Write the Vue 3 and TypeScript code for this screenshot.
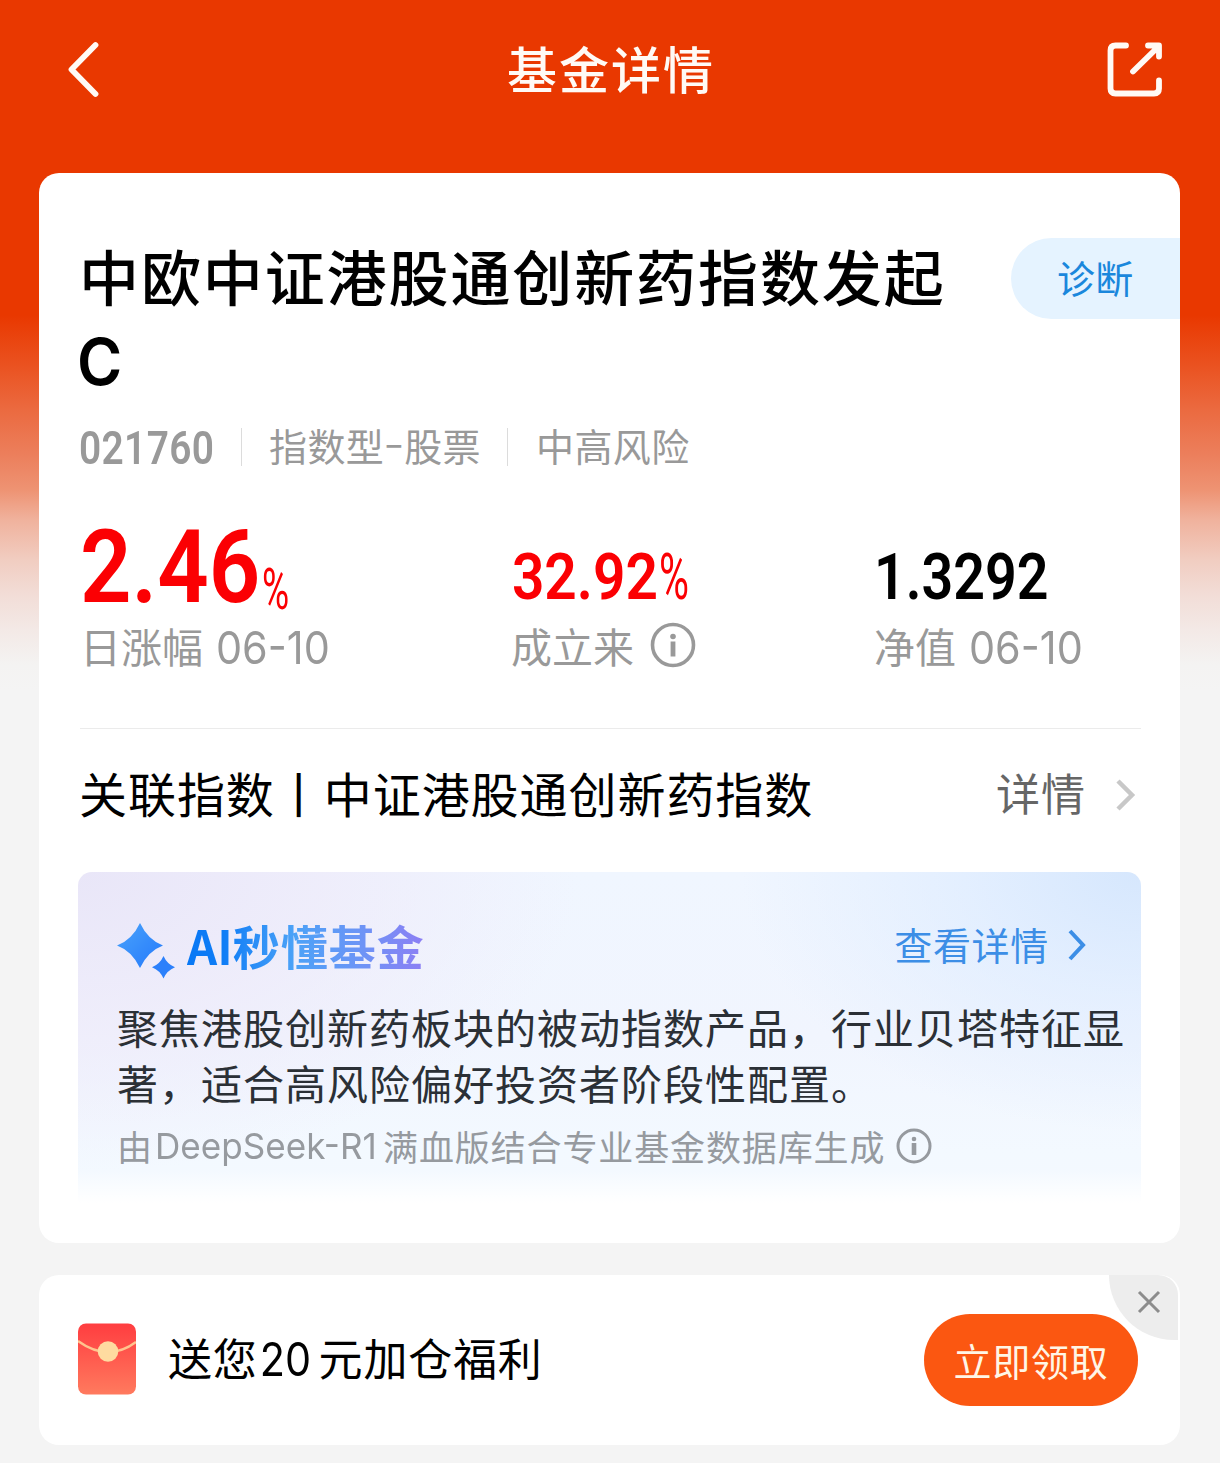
<script setup lang="ts">
interface Stat {
  key: string
  value: string
  percent: boolean
  label: string
  date?: string
  info?: boolean
}

const stats: Stat[] = [
  { key: 'day', value: '2.46', percent: true, label: '日涨幅', date: '06-10' },
  { key: 'total', value: '32.92', percent: true, label: '成立来', info: true },
  { key: 'worth', value: '1.3292', percent: false, label: '净值', date: '06-10' },
]
</script>

<template>
  <div class="page">
    <header class="nav">
      <svg class="back" width="40" height="64" viewBox="0 0 40 64"><path d="M33.500 8 9.500 32.500 33.500 57" /></svg>
      <h1>基金详情</h1>
      <svg class="share" width="64" height="64" viewBox="0 0 64 64">
        <path d="M22 8.500H11.500Q6.500 8.500 6.500 13.500V51.500Q6.500 56.500 11.500 56.500H50Q55 56.500 55 51.500V43.500M29 34.500 54 10M44 8.500H55V19.500" />
      </svg>
    </header>

    <main class="card">
      <div class="title-row">
        <h2>中欧中证港股通创新药指数发起<span class="share-class">C</span></h2>
        <a class="diagnose">诊断</a>
      </div>

      <div class="meta">
        <span class="code"><b>021760</b></span>
        <i></i>
        <span class="type">指数型<em>-</em>股票</span>
        <i></i>
        <span class="risk">中高风险</span>
      </div>

      <div class="stats">
        <div v-for="s in stats" :key="s.key" class="stat" :class="s.key">
          <div class="value"><span class="num">{{ s.value }}</span><span v-if="s.percent" class="pct">%</span></div>
          <div class="label">
            <span>{{ s.label }}</span>
            <span v-if="s.date" class="date">{{ s.date }}</span>
            <svg v-if="s.info" width="46" height="46" viewBox="0 0 46 46">
              <circle cx="23" cy="23" r="20.500" fill="none" stroke="#999" stroke-width="3.600" />
              <circle cx="23" cy="14.500" r="2.800" fill="#999" />
              <rect x="20.600" y="19.500" width="4.800" height="15" fill="#999" />
            </svg>
          </div>
        </div>
      </div>

      <div class="index-row">
        <span class="index-name">关联指数<span class="bar">丨</span>中证港股通创新药指数</span>
        <span class="index-more">详情</span>
        <svg width="24" height="36" viewBox="0 0 24 36"><path d="M4 4 18 18 4 32" /></svg>
      </div>

      <section class="ai">
        <div class="ai-head">
          <svg class="spark" width="58" height="58" viewBox="0 0 58 58">
            <defs>
              <linearGradient id="spark" x1="0" y1="0" x2="1" y2="1">
                <stop offset="0" stop-color="#4aa3fb" />
                <stop offset="1" stop-color="#2479fb" />
              </linearGradient>
            </defs>
            <path fill="url(#spark)" d="M23 2Q31 19 46 24.500 31 30 23 47 15 30 0 24.500 15 19 23 2Z" />
            <path fill="#2c80fb" d="M46.500 35Q50 43 58 46.300 50 49.500 46.500 57.500 43 49.500 35 46.300 43 43 46.500 35Z" />
          </svg>
          <span class="ai-title"><span class="ai-latin">AI</span>秒懂基金</span>
          <span class="ai-more">查看详情</span>
          <svg class="ai-chev" width="22" height="36" viewBox="0 0 22 36"><path d="M4 4 17 18 4 32" /></svg>
        </div>
        <p class="ai-text">聚焦港股创新药板块的被动指数产品，行业贝塔特征显著，适合高风险偏好投资者阶段性配置。</p>
        <div class="ai-foot">
          <span class="by">由</span><span class="model">DeepSeek-R1</span><span>满血版结合专业基金数据库生成</span>
          <svg width="38" height="38" viewBox="0 0 38 38">
            <circle cx="19" cy="19" r="16" fill="none" stroke="#969a9f" stroke-width="3" />
            <circle cx="19" cy="12" r="2.300" fill="#969a9f" />
            <rect x="16.700" y="16" width="4.600" height="12" fill="#969a9f" />
          </svg>
        </div>
      </section>
    </main>

    <section class="promo">
      <svg class="envelope" width="58" height="72" viewBox="0 0 58 72">
        <defs>
          <linearGradient id="env" x1="0" y1="0" x2="0" y2="1">
            <stop offset="0" stop-color="#ff3d40" />
            <stop offset="1" stop-color="#ff7a5e" />
          </linearGradient>
        </defs>
        <rect y="0.500" width="58" height="71" rx="8" fill="url(#env)" />
        <path d="M0 18Q15 29 30 29T58 19" fill="none" stroke="#ffc48e" stroke-width="2.400" />
        <circle cx="30" cy="28.500" r="10.300" fill="#fedba0" />
      </svg>
      <div class="promo-text"><span>送您</span><span class="amount">20</span><span>元加仓福利</span></div>
      <button class="claim">立即领取</button>
      <div class="close">
        <svg width="24" height="24" viewBox="0 0 24 24"><path d="M2 2 22 22M22 2 2 22" /></svg>
      </div>
    </section>
  </div>
</template>

<style>
body {
  margin: 0;
}
</style>

<style scoped>
.page {
  box-sizing: border-box;
  width: 1220px;
  height: 1463px;
  overflow: hidden;
  padding: 0 40px 0 39px;
  font-family: "Noto Sans CJK SC", sans-serif;
  color: #000;
  white-space: nowrap;
  background: linear-gradient(180deg, #e93800 0, #e93800 315px, #ea5220 365px, #eb6a40 410px, #ec7f5c 455px, #ee9373 490px, #f0b29d 520px, #f1cdc1 560px, #f2ddd7 595px, #f3e9e6 630px, #f4f3f2 665px, #f4f4f4 690px);
}
h1, h2, p {
  margin: 0;
  font-weight: 400;
}
.nav {
  height: 173px;
  box-sizing: border-box;
  padding: 37px 12px 0 23px;
  display: flex;
  justify-content: space-between;
  align-items: flex-start;
}
.nav h1 {
  font-size: 50px;
  line-height: 64px;
  letter-spacing: 2px;
  font-weight: 500;
  color: #fffaf5;
  margin: -2px 0 0 16px;
}
.nav path {
  fill: none;
  stroke: #fffaf5;
  stroke-width: 5.800;
  stroke-linecap: round;
  stroke-linejoin: round;
}
.card {
  height: 1070px;
  box-sizing: border-box;
  padding: 61px 39px 0 39px;
  background: #fff;
  border-radius: 20px;
}
.title-row {
  display: flex;
  justify-content: space-between;
  align-items: flex-start;
  margin-right: -39px;
}
.title-row h2 {
  width: 880px;
  padding-left: 1px;
  font-size: 60px;
  line-height: 82px;
  letter-spacing: 1.900px;
  font-weight: 500;
  white-space: normal;
}
.share-class {
  display: block;
  font-family: Inter, sans-serif;
  font-size: 64px;
  font-weight: 600;
  transform: scaleX(0.960);
  transform-origin: left;
  margin: 5px 0 -5px -2px;
}
.diagnose {
  width: 169px;
  height: 81px;
  box-sizing: border-box;
  margin-top: 4px;
  padding-left: 46px;
  border-radius: 41px 0 0 41px;
  background: #e5f3ff;
  color: #1a87dc;
  font-size: 38px;
  line-height: 78px;
  letter-spacing: 0.300px;
}
.meta {
  height: 60px;
  margin-top: 19px;
  display: flex;
  align-items: center;
  color: #999;
  font-size: 38px;
  letter-spacing: 0.400px;
}
.meta i {
  width: 1px;
  height: 38px;
  background: #dcdcdc;
}
.meta > span {
  line-height: 56px;
  margin-top: -4px;
  box-sizing: border-box;
}
.meta > .code {
  width: 163px;
  margin-top: 2px;
  padding-left: 1px;
}
.code b {
  display: inline-block;
  font-family: Roboto, sans-serif;
  font-size: 46px;
  font-weight: 600;
  transform: scaleX(0.845);
  transform-origin: left;
}
.type {
  width: 265px;
  padding-left: 27px;
}
.type em {
  display: inline-block;
  width: 20px;
  font-style: normal;
  text-align: center;
  letter-spacing: 0;
  transform: translateY(-4px) scaleX(1.500);
}
.risk {
  padding-left: 28px;
}
.stats {
  display: flex;
  height: 252px;
  box-sizing: border-box;
  border-bottom: 1px solid #ebebeb;
  margin-left: 2px;
}
.stat {
  flex: none;
  padding-top: 32px;
}
.day { width: 431px; }
.total { width: 363px; }
.value {
  height: 107px;
  display: flex;
  align-items: flex-end;
  font-family: Roboto, sans-serif;
  font-size: 65px;
  line-height: 76px;
  font-weight: 600;
}
.num, .pct {
  display: block;
  transform-origin: left;
}
.day .value, .total .value { color: #fb0003; }
.day .num {
  width: 182px;
  font-size: 102px;
  line-height: 98px;
  transform: scaleX(0.885);
}
.day .pct {
  font-size: 57px;
  line-height: 52px;
  font-weight: 400;
  transform: scaleX(0.650);
}
.total .num {
  width: 147px;
  padding-left: 1px;
  transform: translateY(-1px) scaleX(0.875);
}
.total .pct {
  font-weight: 400;
  transform: translateY(-1px) scaleX(0.630);
}
.worth .num { transform: translateY(-1px) scaleX(0.855); }
.label {
  height: 60px;
  margin-top: -1px;
  display: flex;
  align-items: center;
  color: #999;
  font-size: 41px;
  line-height: 60px;
}
.date {
  font-family: Inter, sans-serif;
  font-size: 45px;
  font-feature-settings: "case";
  margin: 6px 0 0 13px;
  transform: scaleX(0.920);
  transform-origin: left;
}
.label svg { margin: 0 0 0 16px; }
.index-row {
  display: flex;
  align-items: center;
  height: 130px;
  margin-top: -2px;
  font-size: 48px;
  letter-spacing: 0.950px;
}
.index-name { margin-left: 1px; }
.index-more {
  margin-left: auto;
  font-size: 44px;
  color: #666;
}
.index-row svg { margin: 6px 3px 0 28px; }
.index-row path {
  fill: none;
  stroke: #c8c8c8;
  stroke-width: 4.500;
}
.ai {
  height: 331px;
  box-sizing: border-box;
  margin-top: 15px;
  padding: 37px 0 0 39px;
  border-radius: 14px 14px 4px 4px;
  background:
    linear-gradient(180deg, rgba(255, 255, 255, 0) 0, rgba(255, 255, 255, 0) 90%, #fff 100%),
    radial-gradient(ellipse 400px 260px at 100% 0, #d6e7fd 0, rgba(222, 236, 255, 0.700) 45%, rgba(240, 247, 255, 0) 100%),
    radial-gradient(ellipse 500px 300px at 0 0, #e9e6f8 0, rgba(238, 235, 250, 0.800) 50%, rgba(240, 245, 255, 0) 100%),
    linear-gradient(180deg, #f0f6ff 0, #f1f5fe 50%, #f3f9ff 85%, #f4f9ff 100%);
}
.ai-head {
  display: flex;
  align-items: center;
  height: 72px;
}
.spark { margin-top: 9px; }
.ai-title {
  margin: -1px 0 0 12px;
  font-size: 47px;
  line-height: 70px;
  letter-spacing: 1px;
  font-weight: 700;
  color: transparent;
  background: linear-gradient(90deg, #0878f5 0, #0f7df6 15%, #4ca2f7 45%, #6f93f6 75%, #8d7ef4 100%);
  background-clip: text;
  -webkit-background-clip: text;
}
.ai-latin {
  letter-spacing: 0;
}
.ai-more {
  margin: -3px 0 0 auto;
  font-size: 38px;
  letter-spacing: 0.700px;
  color: #3c8ee6;
}
.ai-chev { margin: 0 53px 0 17px; }
.ai-chev path {
  fill: none;
  stroke: #3c8ee6;
  stroke-width: 4;
}
.ai-text {
  margin-top: 17px;
  width: 1010px;
  font-size: 41px;
  line-height: 56px;
  letter-spacing: 1px;
  color: #2b3036;
  white-space: normal;
}
.ai-foot {
  display: flex;
  align-items: center;
  height: 60px;
  margin-top: 5px;
  font-size: 35px;
  letter-spacing: 0.880px;
  color: #969a9f;
}
.by { width: 38px; }
.model {
  width: 228px;
  font-family: Inter, sans-serif;
  font-size: 36px;
  letter-spacing: 0;
  font-feature-settings: "case";
  margin-top: 2px;
  transform: scaleX(0.975);
  transform-origin: left;
}
.ai-foot svg { margin: 1px 0 0 10px; }
.promo {
  position: relative;
  height: 170px;
  margin-top: 32px;
  box-sizing: border-box;
  padding: 0 42px 0 39px;
  display: flex;
  align-items: center;
  background: #fff;
  border-radius: 20px;
}
.envelope { margin-top: -3px; }
.promo-text {
  display: flex;
  align-items: center;
  margin: -7px 0 0 32px;
  font-size: 44px;
  letter-spacing: 0.800px;
}
.amount {
  width: 61px;
  box-sizing: border-box;
  padding-left: 2px;
  margin-top: 4px;
  font-family: Inter, sans-serif;
  font-size: 47px;
  letter-spacing: 0;
  transform: scaleX(0.880);
  transform-origin: left;
}
.claim {
  margin: 0 0 0 auto;
  width: 214px;
  height: 92px;
  padding: 0;
  border: 0;
  border-radius: 46px;
  background: #fb5711;
  color: #fff6e6;
  font-family: inherit;
  font-size: 38px;
  line-height: 86px;
  letter-spacing: 0.800px;
}
.close {
  position: absolute;
  top: 0;
  right: 2px;
  width: 69px;
  height: 65px;
  border-radius: 0 20px 0 65px;
  background: #ededed;
  display: flex;
}
.close svg { margin: 15px 0 0 28px; }
.close path {
  fill: none;
  stroke: #8c8c8c;
  stroke-width: 3;
}
</style>
